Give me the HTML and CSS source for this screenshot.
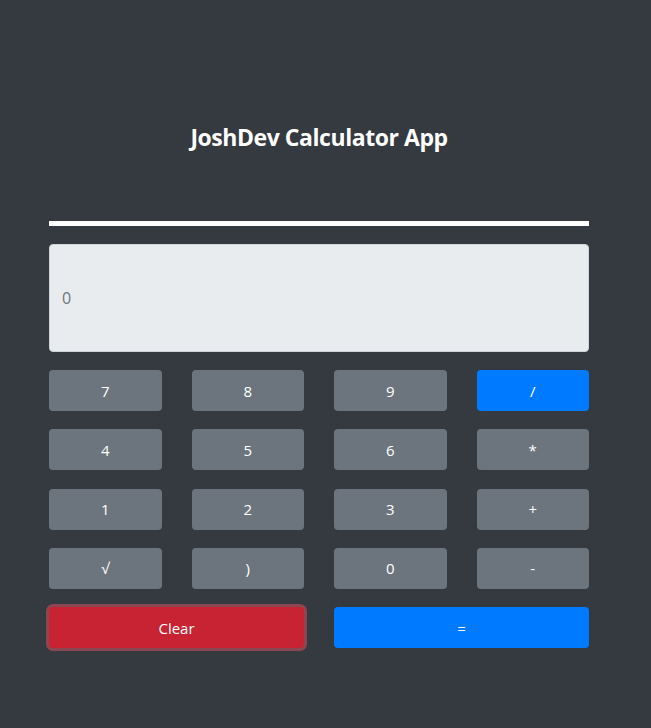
FILE: index.html
```html
<!DOCTYPE html>
<html>
<head>
<meta charset="utf-8">
<link rel="stylesheet" href="styles.css">
</head>
<body>
<div class="app">
  <h1 class="title">JoshDev Calculator App</h1>
  <div class="rule"></div>
  <input class="display" type="text" placeholder="0" readonly>
  <div class="keys">
    <button class="btn sec">7</button>
    <button class="btn sec">8</button>
    <button class="btn sec">9</button>
    <button class="btn pri">/</button>
    <button class="btn sec">4</button>
    <button class="btn sec">5</button>
    <button class="btn sec">6</button>
    <button class="btn sec">*</button>
    <button class="btn sec">1</button>
    <button class="btn sec">2</button>
    <button class="btn sec">3</button>
    <button class="btn sec">+</button>
    <button class="btn sec">√</button>
    <button class="btn sec">)</button>
    <button class="btn sec">0</button>
    <button class="btn sec">-</button>
    <button class="btn danger wide">Clear</button>
    <button class="btn pri wide">=</button>
  </div>
</div>
</body>
</html>
```

FILE: styles.css
```css
html, body {
  margin: 0;
  padding: 0;
  background: #343a40;
  height: 100%;
}
body {
  font-family: "Open Sans", "Noto Sans", "Liberation Sans", sans-serif;
  color: #fff;
}
.app {
  width: 540px;
  margin-left: 49px;
  padding-top: 119px;
  display: flex;
  flex-direction: column;
}
.title {
  margin: 0;
  font-size: 23px;
  font-weight: 700;
  line-height: 36px;
  text-align: center;
  letter-spacing: -0.45px;
}
.rule {
  margin-top: 66px;
  height: 5px;
  background: #fff;
}
.display {
  margin-top: 18px;
  box-sizing: border-box;
  height: 108px;
  width: 100%;
  background: #e9ecef;
  border: 1px solid #ced4da;
  border-radius: 4px;
  padding: 0 12px;
  font-family: inherit;
  font-size: 16px;
  outline: none;
}
.display::placeholder {
  color: #6c757d;
}
.keys {
  margin-top: 18px;
  display: grid;
  grid-template-columns: repeat(4, 1fr);
  column-gap: 30px;
  row-gap: 18.3px;
}
.btn {
  height: 41px;
  border: none;
  border-radius: 4px;
  color: #fff;
  font-family: inherit;
  font-size: 15px;
  padding: 0;
}
.sec { background: #6c757d; }
.pri { background: #007bff; }
.danger {
  background: #c82333;
  box-shadow: 0 0 0 3px rgba(225, 83, 97, 0.5);
}
.wide { grid-column: span 2; }
```
